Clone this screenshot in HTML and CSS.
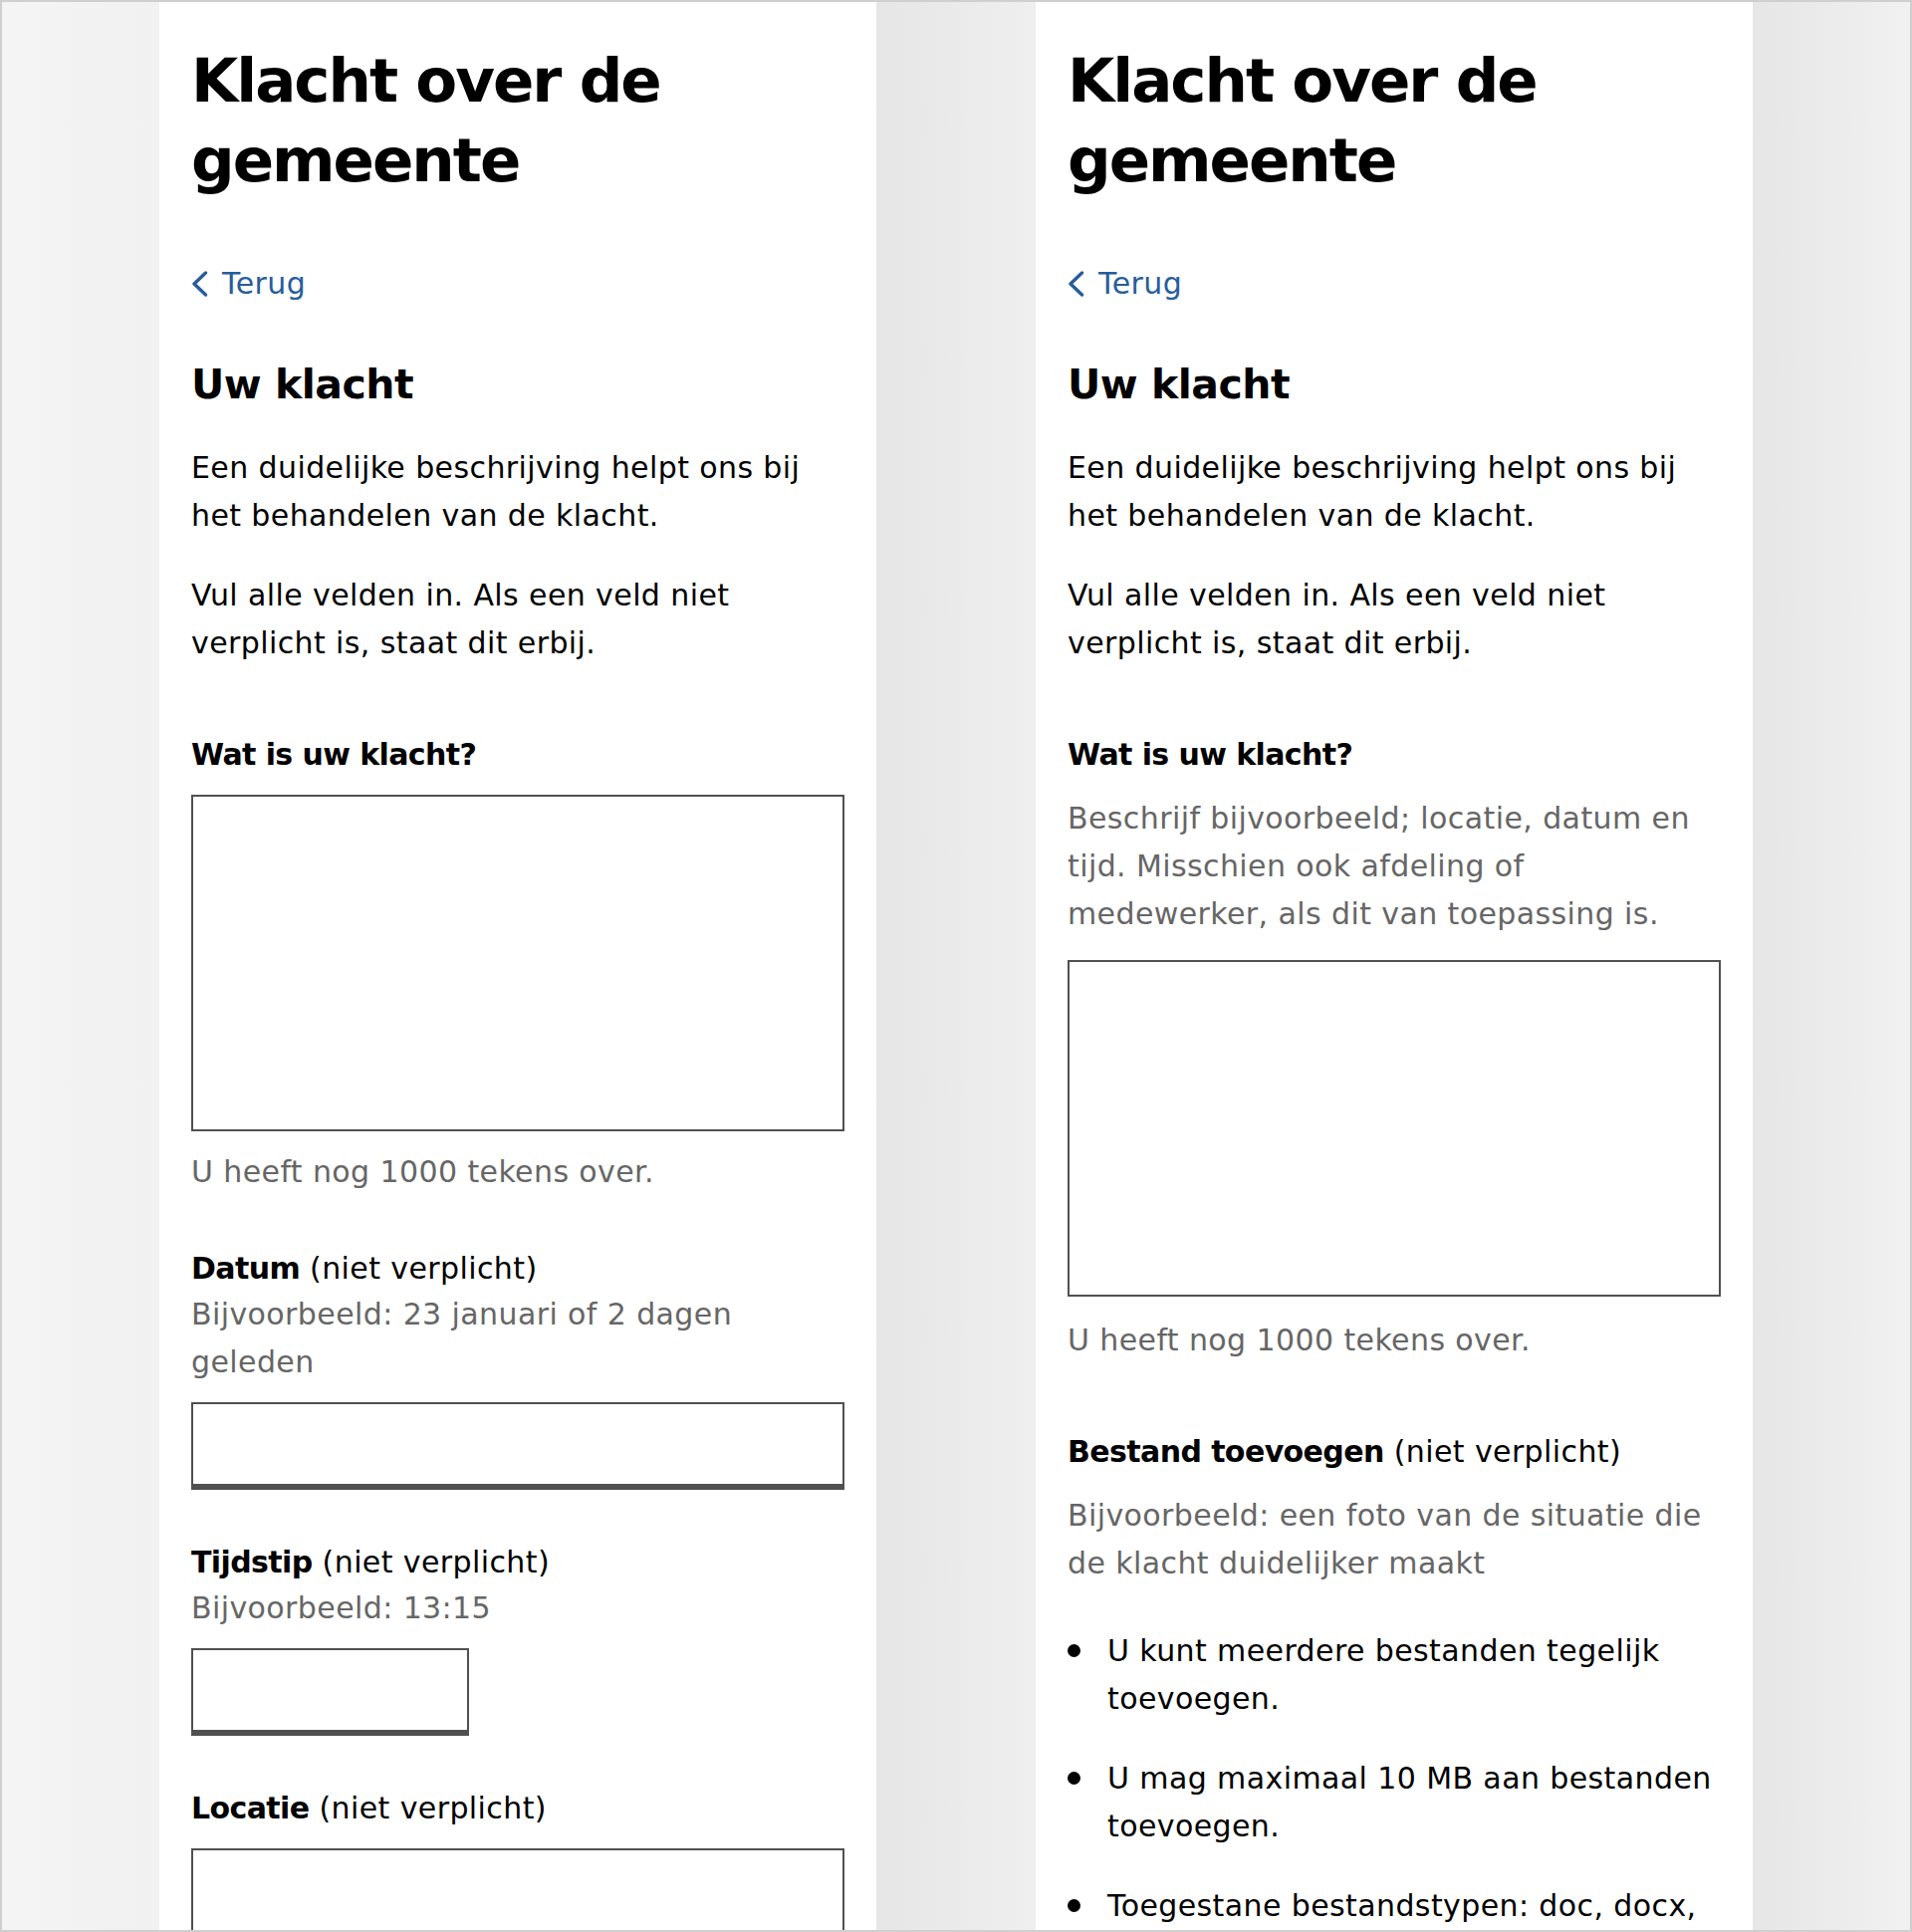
FILE: index.html
```html
<!DOCTYPE html>
<html lang="nl">
<head>
  <meta charset="UTF-8">
  <meta name="viewport" content="width=device-width, initial-scale=1.0">
  <title>Klacht over de gemeente</title>
  <link rel="stylesheet" href="styles.css">
</head>
<body>
  <div class="frame">

    <section class="panel">
      <h1 class="title">Klacht over de gemeente</h1>
      <a class="back" href="#">
        <svg class="back-icon" width="17" height="26" viewBox="0 0 17 26" aria-hidden="true">
          <polyline points="14.5,2 3,13 14.5,24" />
        </svg>
        Terug
      </a>
      <h2 class="section-title">Uw klacht</h2>
      <p class="intro">Een duidelijke beschrijving helpt ons bij het behandelen van de klacht.</p>
      <p class="intro">Vul alle velden in. Als een veld niet verplicht is, staat dit erbij.</p>

      <form class="form">
        <div class="field field-counted">
          <label class="label" for="klacht-a"><strong>Wat is uw klacht?</strong></label>
          <textarea class="textarea" id="klacht-a"></textarea>
          <p class="counter">U heeft nog 1000 tekens over.</p>
        </div>

        <div class="field">
          <label class="label" for="datum"><strong>Datum</strong> (niet verplicht)</label>
          <p class="hint hint-tight">Bijvoorbeeld: 23 januari of 2 dagen geleden</p>
          <input class="input" type="text" id="datum">
        </div>

        <div class="field">
          <label class="label" for="tijdstip"><strong>Tijdstip</strong> (niet verplicht)</label>
          <p class="hint hint-tight">Bijvoorbeeld: 13:15</p>
          <input class="input input-short" type="text" id="tijdstip">
        </div>

        <div class="field">
          <label class="label" for="locatie"><strong>Locatie</strong> (niet verplicht)</label>
          <input class="input" type="text" id="locatie">
        </div>
      </form>
    </section>

    <section class="panel panel-new">
      <h1 class="title">Klacht over de gemeente</h1>
      <a class="back" href="#">
        <svg class="back-icon" width="17" height="26" viewBox="0 0 17 26" aria-hidden="true">
          <polyline points="14.5,2 3,13 14.5,24" />
        </svg>
        Terug
      </a>
      <h2 class="section-title">Uw klacht</h2>
      <p class="intro">Een duidelijke beschrijving helpt ons bij het behandelen van de klacht.</p>
      <p class="intro">Vul alle velden in. Als een veld niet verplicht is, staat dit erbij.</p>

      <form class="form">
        <div class="field field-counted">
          <label class="label" for="klacht-b"><strong>Wat is uw klacht?</strong></label>
          <p class="hint">Beschrijf bijvoorbeeld; locatie, datum en tijd. Misschien ook afdeling of medewerker, als dit van toepassing is.</p>
          <textarea class="textarea" id="klacht-b"></textarea>
          <p class="counter">U heeft nog 1000 tekens over.</p>
        </div>

        <div class="field">
          <label class="label" for="bestand"><strong>Bestand toevoegen</strong> (niet verplicht)</label>
          <p class="hint">Bijvoorbeeld: een foto van de situatie die de klacht duidelijker maakt</p>
          <ul class="rules">
            <li>U kunt meerdere bestanden tegelijk toevoegen.</li>
            <li>U mag maximaal 10 MB aan bestanden toevoegen.</li>
            <li>Toegestane bestandstypen: doc, docx, gif, jpg, jpeg, pdf, png, xls, xlsx.</li>
          </ul>
        </div>
      </form>
    </section>

  </div>
</body>
</html>
```

FILE: styles.css
```css
:root {
  --text: #000000;
  --muted: #666666;
  --link: #275d9b;
  --line: #505050;
}

* {
  box-sizing: border-box;
}

html,
body {
  margin: 0;
  padding: 0;
}

body {
  font-family: "DejaVu Sans", "Liberation Sans", sans-serif;
  font-size: 30px;
  line-height: 48px;
  letter-spacing: 0.4px;
  color: var(--text);
}

.frame {
  height: 1940px;
  overflow: hidden;
  display: flex;
  gap: 160px;
  padding-left: 158px;
  border: 2px solid #cfcfcf;
  background: linear-gradient(to right,
    #f4f4f4 0,
    #f1f1f1 158px,
    #e6e6e6 878px,
    #efefef 1038px,
    #e6e6e6 1758px,
    #f1f1f1 1916px);
}

.panel {
  flex: none;
  width: 720px;
  background: #ffffff;
  padding: 39px 32px 0;
}

.title {
  margin: 0 0 60px;
  font-size: 61px;
  line-height: 80px;
  font-weight: bold;
  letter-spacing: -2px;
}

.back {
  display: flex;
  align-items: center;
  gap: 14px;
  margin-bottom: 49px;
  color: var(--link);
  text-decoration: none;
}

.back-icon polyline {
  fill: none;
  stroke: var(--link);
  stroke-width: 3.4;
  stroke-linecap: round;
  stroke-linejoin: round;
}

.section-title {
  margin: 0 0 32px;
  font-size: 41px;
  line-height: 56px;
  font-weight: bold;
  letter-spacing: -0.5px;
}

.intro {
  margin: 0 0 32px;
}

.form {
  margin-top: 64px;
}

.field {
  margin-bottom: 49px;
}

.label {
  display: block;
}

.label strong {
  letter-spacing: -0.6px;
}

.hint {
  margin: 0;
  color: var(--muted);
}

.hint-tight {
  margin-top: -2px;
}

.textarea,
.input {
  display: block;
  width: 100%;
  margin: 16px 0 0;
  border: 2px solid var(--line);
  border-radius: 0;
  background: #ffffff;
  font: inherit;
  outline: none;
}

.textarea {
  height: 338px;
  resize: none;
}

.input {
  height: 88px;
  border-bottom-width: 6px;
}

.input-short {
  width: 279px;
}

.counter {
  margin: 17px 0 0;
  color: var(--muted);
}

/* tweede versie van het formulier */
.panel-new .hint {
  margin-top: 16px;
}

.panel-new .textarea {
  margin-top: 22px;
}

.panel-new .counter {
  margin-top: 20px;
}

.panel-new .field-counted {
  margin-bottom: 64px;
}

.rules {
  list-style: none;
  margin: 40px 0 0;
  padding: 0;
}

.rules li {
  display: flex;
  margin-bottom: 32px;
}

.rules li::before {
  content: "";
  flex: none;
  width: 13px;
  height: 13px;
  margin: 17px 27px 0 0;
  border-radius: 50%;
  background: var(--text);
}
```
